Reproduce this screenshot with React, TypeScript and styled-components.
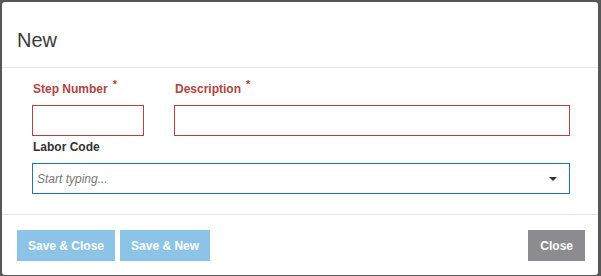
import React from "react";
import styled, { createGlobalStyle } from "styled-components";

const Global = createGlobalStyle`
  html, body { margin: 0; padding: 0; background: #575757; }
  body { font-family: "Liberation Sans", Arial, sans-serif; }
  * { box-sizing: border-box; }
`;

const Backdrop = styled.div`
  width: 601px;
  height: 276px;
  padding: 2px 3px 0 2px;
  background: #575757;
  overflow: hidden;
`;

const Modal = styled.div`
  width: 596px;
  height: 273px;
  background: #fff;
  border-radius: 3px;
  display: flex;
  flex-direction: column;
`;

const Header = styled.div`
  padding: 27px 15px 16px 15px;
  border-bottom: 1px solid #e5e5e5;
`;

const Title = styled.h4`
  margin: 0;
  font-size: 20px;
  line-height: 22px;
  font-weight: normal;
  color: #3a3a3a;
`;

const Body = styled.div`
  padding: 14px 28px 20px 30px;
  border-bottom: 1px solid #e5e5e5;
  display: flex;
  flex-direction: column;
`;

const Row = styled.div`
  display: flex;
  gap: 30px;
`;

const Field = styled.div<{ $grow?: boolean; $width?: number }>`
  display: flex;
  flex-direction: column;
  ${(p) => (p.$grow ? "flex: 1;" : "")}
  ${(p) => (p.$width ? `width: ${p.$width}px;` : "")}
`;

const Label = styled.label<{ $required?: boolean }>`
  font-size: 12px;
  line-height: 15px;
  font-weight: bold;
  color: ${(p) => (p.$required ? "#b2443f" : "#333")};
  margin-bottom: 8px;
  padding-left: 1px;
  white-space: nowrap;
`;

const Star = styled.span`
  color: #c0392b;
  font-size: 11px;
  margin-left: 5px;
  position: relative;
  top: -5px;
`;

const TextInput = styled.input<{ $invalid?: boolean }>`
  height: 31px;
  border: 1px solid ${(p) => (p.$invalid ? "#b2443f" : "#1b7ab6")};
  border-radius: 0;
  padding: 0 4px;
  font: inherit;
  font-size: 12px;
  outline: none;
  width: 100%;
`;

const Combo = styled.div`
  position: relative;
  height: 31px;
  border: 1px solid #1b7ab6;
  display: flex;
  align-items: center;
  padding: 0 12px 0 4px;
`;

const ComboInput = styled.input`
  flex: 1;
  border: none;
  outline: none;
  font-family: "Liberation Sans", Arial, sans-serif;
  font-size: 12px;
  padding: 0;
  &::placeholder {
    font-style: italic;
    color: #777;
  }
`;

const Caret = styled.span`
  width: 0;
  height: 0;
  border-left: 4px solid transparent;
  border-right: 4px solid transparent;
  border-top: 4px solid #333;
  margin-top: 1px;
`;

const LaborLabel = styled(Label)`
  margin-top: 4px;
`;

const Footer = styled.div`
  padding: 15px 13px 0 15px;
  display: flex;
  gap: 5px;
`;

const Button = styled.button<{ $variant: "primary" | "secondary" }>`
  height: 31px;
  padding: 0 ${(p) => (p.$variant === "primary" ? "11px" : "12px")};
  border: none;
  border-radius: 0;
  font-family: "Liberation Sans", Arial, sans-serif;
  font-size: 12px;
  font-weight: bold;
  color: #fff;
  background: ${(p) => (p.$variant === "primary" ? "#8bc4e6" : "#8b8b90")};
  cursor: pointer;
`;

const Spacer = styled.div`
  flex: 1;
`;

export default function App() {
  return (
    <>
      <Global />
      <Backdrop>
        <Modal>
          <Header>
            <Title>New</Title>
          </Header>
          <Body>
            <Row>
              <Field $width={112}>
                <Label $required>
                  Step Number<Star>*</Star>
                </Label>
                <TextInput $invalid />
              </Field>
              <Field $grow>
                <Label $required>
                  Description<Star>*</Star>
                </Label>
                <TextInput $invalid />
              </Field>
            </Row>
            <LaborLabel>Labor Code</LaborLabel>
            <Combo>
              <ComboInput placeholder="Start typing..." />
              <Caret />
            </Combo>
          </Body>
          <Footer>
            <Button $variant="primary">Save &amp; Close</Button>
            <Button $variant="primary">Save &amp; New</Button>
            <Spacer />
            <Button $variant="secondary">Close</Button>
          </Footer>
        </Modal>
      </Backdrop>
    </>
  );
}
